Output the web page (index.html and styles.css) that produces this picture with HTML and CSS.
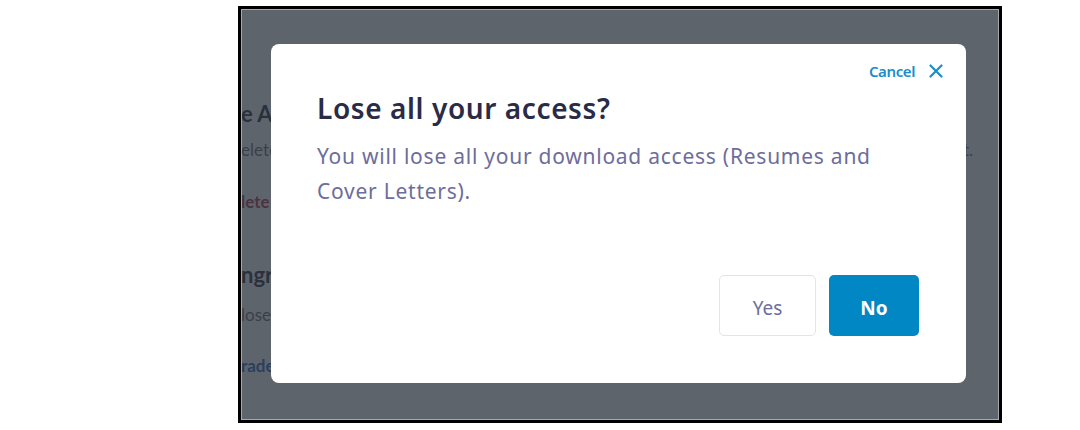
FILE: index.html
```html
<!DOCTYPE html>
<html lang="en">
<head>
<meta charset="utf-8">
<title>Lose all your access?</title>
<link rel="stylesheet" href="styles.css">
</head>
<body>
<div class="frame">
  <div class="page">
    <div class="page-col">
      <div class="pg-h pg-h1">e Acc</div>
      <div class="pg-row">
        <span class="pg-t">elete</span>
        <span class="pg-t pg-end">t.</span>
      </div>
      <div class="pg-link red">lete</div>
      <div class="pg-h pg-h2">ngra</div>
      <div class="pg-t pg-t2">lose</div>
      <div class="pg-link blue">rade</div>
    </div>
  </div>
  <div class="overlay">
    <div class="modal" role="dialog" aria-labelledby="mt">
      <div class="modal-head">
        <button class="cancel" type="button">
          <span>Cancel</span>
          <svg class="x" width="14" height="14" viewBox="0 0 14 14" aria-hidden="true">
            <path d="M1.5 1.5 L12.5 12.5 M12.5 1.5 L1.5 12.5" stroke="#1a8ecb" stroke-width="2.2" stroke-linecap="round" fill="none"/>
          </svg>
        </button>
      </div>
      <h2 class="title" id="mt">Lose all your access?</h2>
      <p class="desc">You will lose all your download access (Resumes and<br>Cover Letters).</p>
      <div class="actions">
        <button class="btn btn-yes" type="button">Yes</button>
        <button class="btn btn-no" type="button">No</button>
      </div>
    </div>
  </div>
</div>
</body>
</html>
```

FILE: styles.css
```css
* { box-sizing: border-box; }

html, body {
  margin: 0;
  padding: 0;
  background: #ffffff;
}

body {
  width: 1080px;
  height: 430px;
  padding: 6px 0 0 238px;
  font-family: "Noto Sans", "Lato", sans-serif;
}

.frame {
  position: relative;
  width: 764px;
  height: 417px;
  border: 3px solid #000000;
  overflow: hidden;
  background: #ffffff;
}

/* background page behind the dim overlay */
.page {
  height: 100%;
}

.page-col {
  display: flex;
  flex-direction: column;
  align-items: flex-start;
  padding-top: 90px;
  white-space: nowrap;
  font-family: "Lato", sans-serif;
}

.pg-row {
  display: flex;
  justify-content: space-between;
  align-self: stretch;
  margin-top: 9px;
}

.pg-h {
  font-weight: 700;
  font-size: 22px;
  line-height: 30px;
  color: #1f2430;
}
.pg-h2 { margin-top: 46px; }

.pg-t {
  font-size: 17px;
  line-height: 24px;
  color: #60646c;
}
.pg-end { padding-right: 26px; }
.pg-t2 { margin-top: 13px; }

.pg-link {
  font-weight: 700;
  font-size: 17px;
  line-height: 24px;
}
.pg-link.red { color: #b02a40; margin-top: 28px; }
.pg-link.blue { color: #1d5fb8; margin-top: 27px; }

.overlay {
  position: absolute;
  inset: 0;
  background: rgba(46, 53, 64, 0.77);
  box-shadow: inset 0 0 0 1px #a6a9ae;
  padding: 35px 0 0 30px;
}

.modal {
  width: 695px;
  height: 339px;
  background: #ffffff;
  border-radius: 8px;
  padding: 17px 23px 0 46px;
  display: flex;
  flex-direction: column;
}

.modal-head {
  display: flex;
  justify-content: flex-end;
  height: 20px;
}

.cancel {
  display: flex;
  align-items: center;
  gap: 14px;
  border: 0;
  background: none;
  padding: 0;
  font-family: inherit;
  font-size: 15px;
  font-weight: 600;
  line-height: 20px;
  color: #1a8ecb;
  letter-spacing: -0.4px;
  cursor: pointer;
}

.x { display: block; margin-top: -1px; }

.title {
  margin: 9px 0 0 0;
  font-size: 28px;
  line-height: 36px;
  font-weight: 600;
  letter-spacing: 0.6px;
  color: #2a2b47;
}

.desc {
  margin: 13px 0 0 0;
  font-size: 21px;
  line-height: 35px;
  letter-spacing: 0.75px;
  color: #6d6d9c;
}

.actions {
  display: flex;
  justify-content: flex-end;
  gap: 13px;
  margin-top: 66px;
  padding-right: 24px;
}

.btn {
  height: 61px;
  border-radius: 5px;
  padding-top: 5px;
  font-family: inherit;
  font-size: 19px;
  cursor: pointer;
}

.btn-yes {
  width: 97px;
  background: #ffffff;
  border: 1px solid #e3e1f6;
  color: #6d6d9c;
}

.btn-no {
  width: 90px;
  background: #0187c4;
  border: 0;
  color: #ffffff;
  font-weight: 700;
}
```
